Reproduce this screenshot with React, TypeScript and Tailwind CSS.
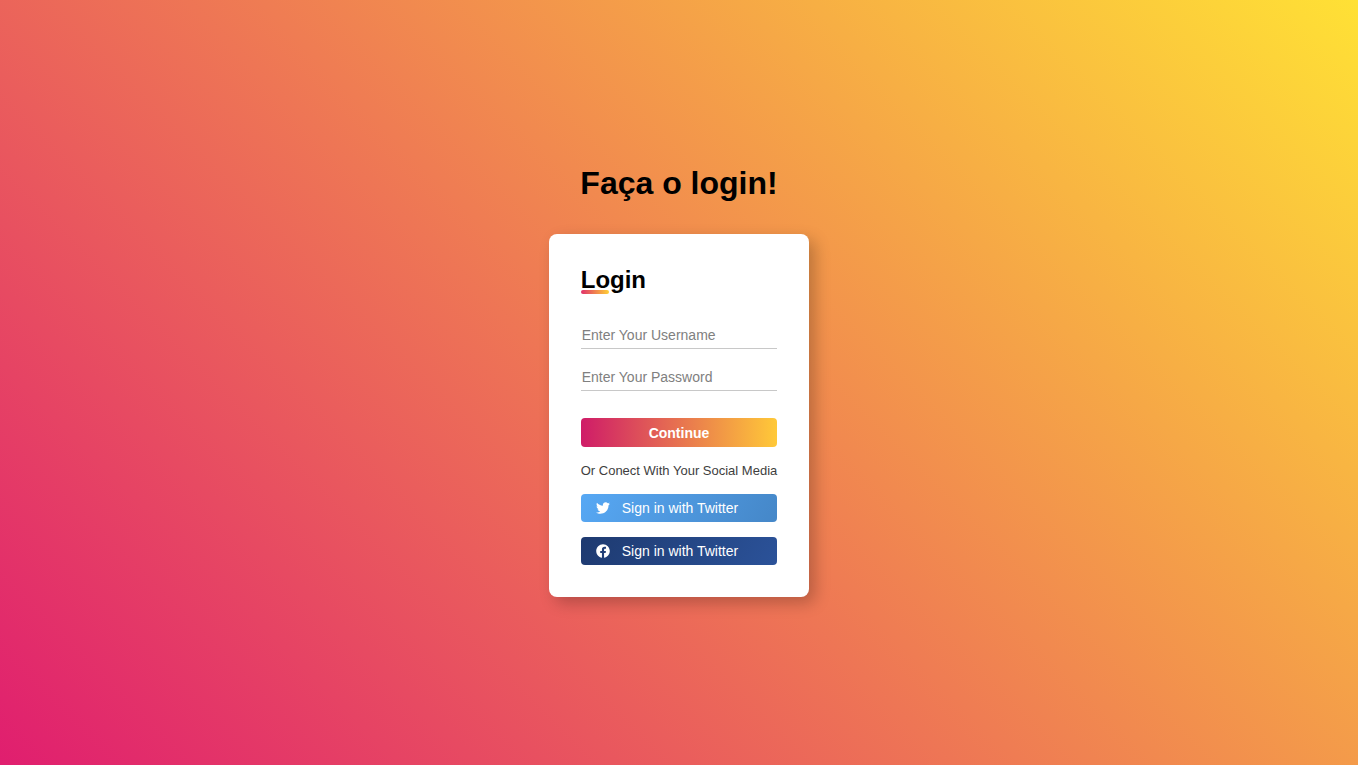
import React from "react";
import { FaTwitter, FaFacebook } from "react-icons/fa";

const field =
  "block h-[27px] w-full border-b border-[#c8c8c8] bg-transparent px-px text-sm text-black outline-none placeholder:text-[#808080]";

const social = "flex h-7 items-center gap-3 rounded px-[15px] text-sm text-white";

export default function App() {
  return (
    <main className="flex min-h-screen flex-col items-center justify-center bg-[linear-gradient(45deg,#e01e6f,#ffe135)] font-['Liberation_Sans',Arial,sans-serif] text-black">
      <h1 className="mb-9 text-[32px] leading-[30px] font-bold">Faça o login!</h1>
      <form
        className="flex flex-col rounded-lg bg-white p-8 shadow-[6px_6px_16px_rgba(0,0,0,0.23)]"
        onSubmit={(e) => e.preventDefault()}
      >
        <h2 className="relative mb-7 self-start text-2xl leading-7 font-bold">
          Login
          <span className="absolute bottom-0 left-0 h-1 w-7 rounded bg-[linear-gradient(to_right,#e0316b,#ffd035)]" />
        </h2>
        <div className="flex flex-col gap-[15px]">
          <input className={field} type="text" aria-label="Username" placeholder="Enter Your Username" />
          <input className={field} type="password" aria-label="Password" placeholder="Enter Your Password" />
        </div>
        <button
          type="submit"
          className="mt-[27px] h-[29px] rounded bg-[linear-gradient(to_right,#cf1c68,#ffc938)] text-sm font-bold text-white"
        >
          Continue
        </button>
        <p className="my-4 text-[13px] leading-[15px] text-[#3e3e3e]">Or Conect With Your Social Media</p>
        <div className="flex flex-col gap-[15px]">
          <button type="button" className={`${social} bg-[linear-gradient(120deg,#57a8f4,#4587c8)]`}>
            <FaTwitter size={14} aria-hidden />
            Sign in with Twitter
          </button>
          <button type="button" className={`${social} bg-[linear-gradient(120deg,#1e3a70,#2b5299)]`}>
            <FaFacebook size={14} aria-hidden />
            Sign in with Twitter
          </button>
        </div>
      </form>
    </main>
  );
}
